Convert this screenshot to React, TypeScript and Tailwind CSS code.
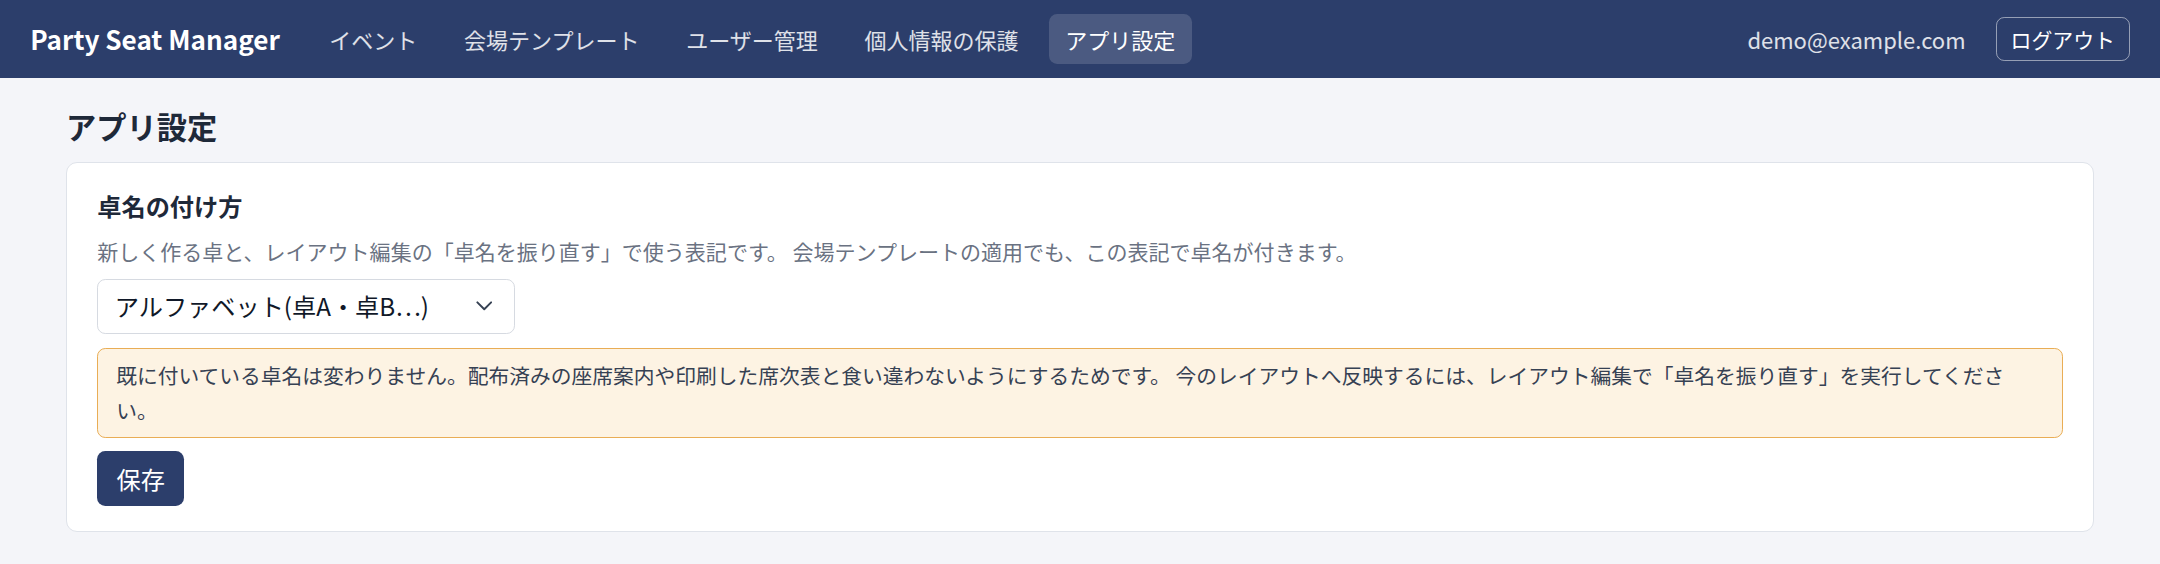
import React, { useState } from "react";

const navItems = ["イベント", "会場テンプレート", "ユーザー管理", "個人情報の保護", "アプリ設定"];

const namingOptions = [
  { value: "alpha", head: "アルファベット(卓A・卓B", tail: ")" },
  { value: "number", head: "数字(卓1・卓2", tail: ")" },
];

const App: React.FC = () => {
  const [naming, setNaming] = useState("alpha");
  const [open, setOpen] = useState(false);
  const active = "アプリ設定";
  const current = namingOptions.find((o) => o.value === naming) || namingOptions[0];

  return (
    <div className="min-h-screen bg-[#f4f5f9]" style={{ fontFamily: '"Noto Sans CJK JP", "Noto Sans", sans-serif' }}>
      {/* screenshot was taken at 1.375x device scale */}
      <div className="[zoom:1.375]">
        <header className="flex h-[57px] items-center justify-between bg-[#2c3e6b] px-[22px]">
          <div className="flex items-center gap-6">
            <span className="text-[19px] font-bold text-white">Party Seat Manager</span>
            <nav className="flex items-center gap-2.5">
              {navItems.map((item) => (
                <a
                  key={item}
                  href="#"
                  className={
                    item === active
                      ? "rounded-md bg-white/15 px-3 py-1.5 text-base leading-6 text-white"
                      : "rounded-md px-3 py-1.5 text-base leading-6 text-white/85"
                  }
                >
                  {item}
                </a>
              ))}
            </nav>
          </div>
          <div className="flex items-center gap-[22px]">
            <span className="text-base text-white/85">demo@example.com</span>
            <button className="rounded-md border border-white/50 px-2.5 py-1 text-[15.2px] leading-normal text-white">
              ログアウト
            </button>
          </div>
        </header>

        <main className="px-12 pt-5 pb-6">
          <h1 className="mb-[11px] text-[22px] font-bold leading-[30px] text-gray-800">アプリ設定</h1>

          <section className="rounded-lg border border-[#dfe3ea] bg-white px-[22px] py-[18px]">
            <h2 className="text-[17.6px] font-bold leading-[26px] text-gray-800">卓名の付け方</h2>
            <p className="mt-2 text-[15.3px] leading-6 text-gray-500">
              新しく作る卓と、レイアウト編集の「卓名を振り直す」で使う表記です。 会場テンプレートの適用でも、この表記で卓名が付きます。
            </p>

            <div className="relative mt-2 w-[304px]">
              <button
                type="button"
                onClick={() => setOpen(!open)}
                className="flex h-10 w-full items-center justify-between rounded-md border border-[#d6dae1] bg-white pl-3 pr-4 text-left text-[17.6px] text-gray-900"
              >
                <span>
                  {current.head}…{current.tail}
                </span>
                <svg
                  className="h-[7px] w-3 text-gray-700"
                  viewBox="0 0 12 7"
                  fill="none"
                  stroke="currentColor"
                  strokeWidth="1.4"
                  strokeLinecap="round"
                  strokeLinejoin="round"
                >
                  <path d="M1 1l5 5 5-5" />
                </svg>
              </button>
              {open && (
                <div className="absolute left-0 top-11 z-10 w-full rounded-md border border-[#d6dae1] bg-white py-1 shadow-md">
                  {namingOptions.map((o) => (
                    <div
                      key={o.value}
                      onClick={() => {
                        setNaming(o.value);
                        setOpen(false);
                      }}
                      className="cursor-pointer px-3 py-1.5 text-base text-gray-900 hover:bg-gray-100"
                    >
                      {o.head}…{o.tail}
                    </div>
                  ))}
                </div>
              )}
            </div>

            <div className="mt-2.5 rounded-md border border-[#e9ad55] bg-[#fdf3e3] px-[13px] py-[7px] text-[15.1px] leading-[25px] text-gray-700">
              既に付いている卓名は変わりません。配布済みの座席案内や印刷した席次表と食い違わないようにするためです。 今のレイアウトへ反映するには、レイアウト編集で「卓名を振り直す」を実行してください。
            </div>

            <button className="mt-2.5 h-10 rounded-md bg-[#2c3e6b] px-3.5 text-[17.6px] text-white">保存</button>
          </section>
        </main>
      </div>
    </div>
  );
};

export default App;
